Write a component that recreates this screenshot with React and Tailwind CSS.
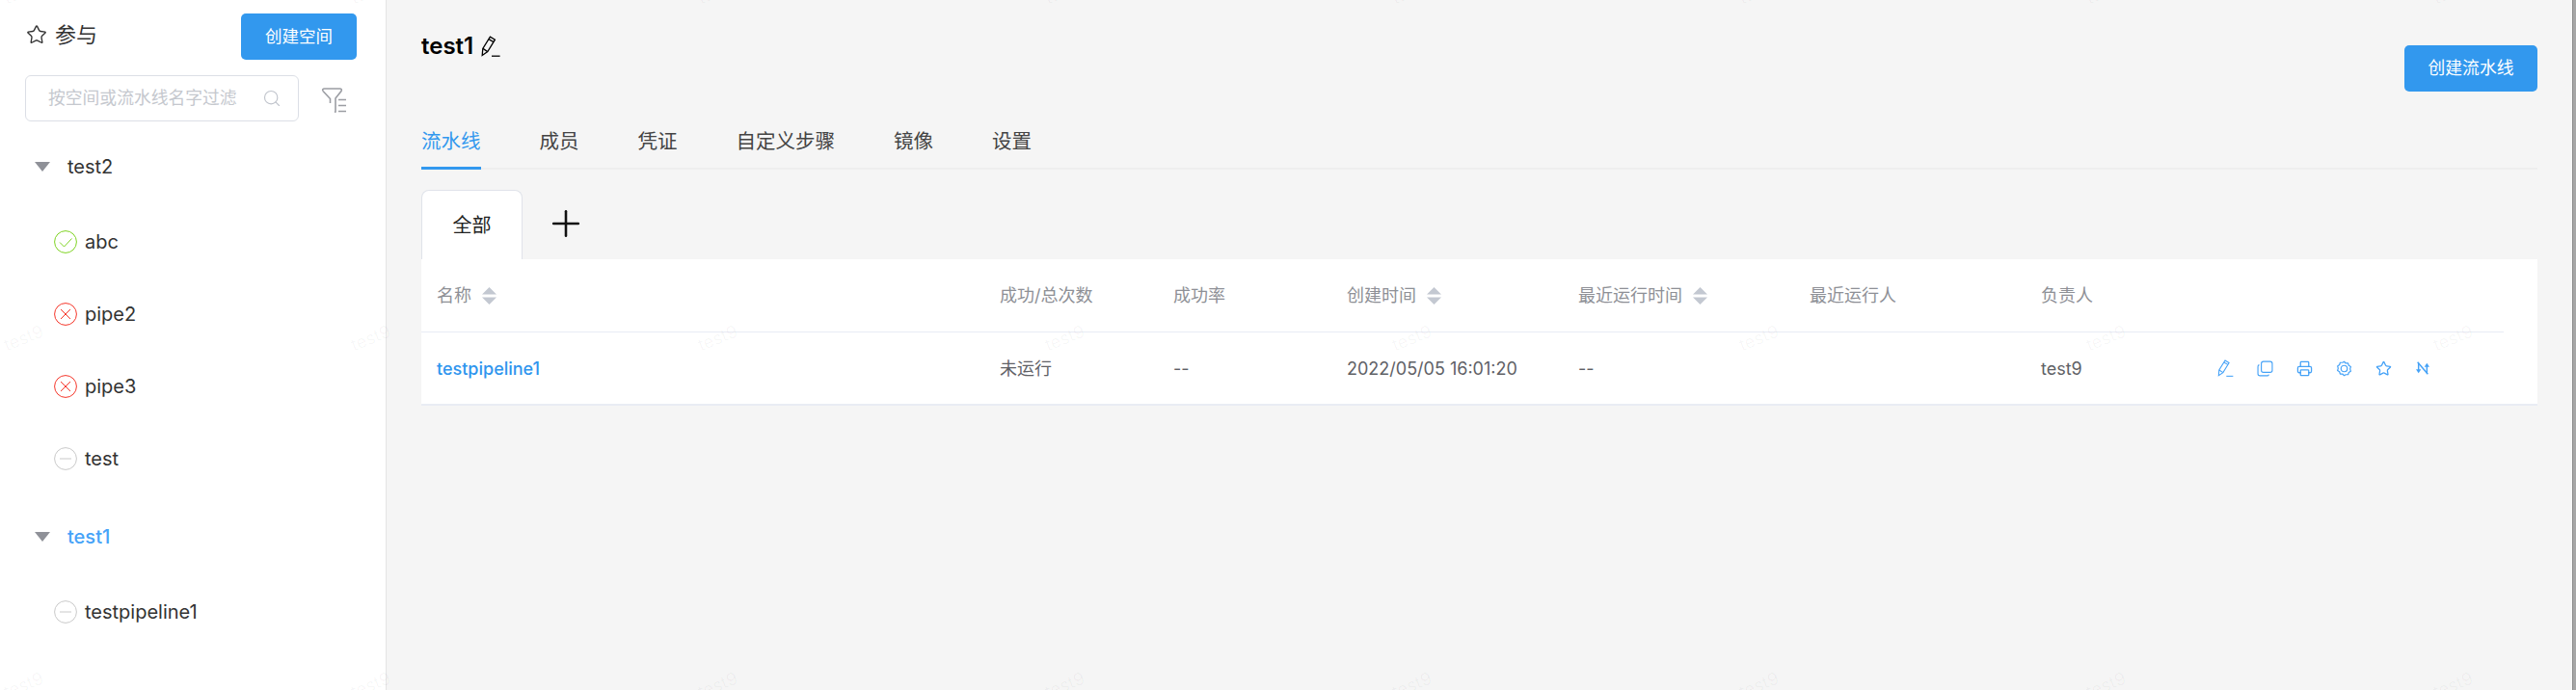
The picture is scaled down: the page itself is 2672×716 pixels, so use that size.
import React from "react";
import { Star, Search, Printer, Plus } from "lucide-react";

const groups = [
  {
    name: "test2",
    active: false,
    items: [
      { name: "abc", status: "ok" },
      { name: "pipe2", status: "fail" },
      { name: "pipe3", status: "fail" },
      { name: "test", status: "none" },
    ],
  },
  {
    name: "test1",
    active: true,
    items: [{ name: "testpipeline1", status: "none" }],
  },
];

const tabs = ["流水线", "成员", "凭证", "自定义步骤", "镜像", "设置"];

const PencilIcon = ({ className }) => (
  <svg viewBox="0 0 20 22" fill="none" stroke="currentColor" strokeWidth="1.3" className={className}>
    <path d="M1.2 20.5l.6-7L9.4 1.2l5 3L6.8 16.6l-5.6 3.9z" />
    <path d="M8 3.6l5 3" />
    <path d="M1.9 13.4l4.9 3.2" />
    <path d="M11 21.2h8.6" />
  </svg>
);

const CopyIcon = ({ className }) => (
  <svg viewBox="0 0 24 24" fill="none" stroke="currentColor" strokeWidth="1.6" className={className}>
    <rect x="6.5" y="1.5" width="16" height="16" rx="3" />
    <path d="M3.5 6.5A2.5 2.5 0 0 0 1.5 9v10.5a3 3 0 0 0 3 3H15a2.5 2.5 0 0 0 2.5-2" />
  </svg>
);

const GearIcon = ({ className }) => (
  <svg viewBox="0 0 24 24" fill="none" stroke="currentColor" strokeWidth="1.7" strokeLinejoin="round" className={className}>
    <path d="M12 1.8l2.4 2.4h3.4l1 3.2 2.9 1.9-1 3.2 1 3.3-2.9 1.8-1 3.2h-3.4L12 22.2l-2.4-2.4H6.2l-1-3.2-2.9-1.8 1-3.3-1-3.2 2.9-1.9 1-3.2h3.4z" />
    <circle cx="12" cy="12" r="4.6" />
  </svg>
);

const SyncOffIcon = ({ className }) => (
  <svg viewBox="0 0 24 24" fill="none" stroke="currentColor" strokeWidth="2.2" className={className}>
    <path d="M4 2.5l16 19" />
    <path d="M5.5 4v11" />
    <path d="M18.5 20V9" />
    <path d="M1.5 14h8l-4 6z" fill="currentColor" stroke="none" />
    <path d="M14.5 10h8l-4-6z" fill="currentColor" stroke="none" />
  </svg>
);

const FilterIcon = ({ className }) => (
  <svg viewBox="0 0 26 26" fill="none" stroke="currentColor" strokeWidth="1.6" className={className}>
    <path d="M2 3.5Q1 1 3.5 1h16q2.5 0 1.5 2.5L15 11v14l-1 .5" />
    <path d="M2 3.5L9.5 11.5V16" />
    <path d="M18 12.5h8M18 18.5h8M18 24.5h8" />
  </svg>
);

const SortIcon = () => (
  <svg viewBox="0 0 15 18" className="w-[15px] h-[18px] text-[#c3c8d1]" fill="currentColor">
    <path d="M7.5 0L15 7.5H0z" />
    <path d="M0 10.5h15L7.5 18z" />
  </svg>
);

const Caret = () => (
  <svg viewBox="0 0 16 10" className="w-4 h-[10px] text-[#8f9198]" fill="currentColor">
    <path d="M0 0h16L8 10z" />
  </svg>
);

const StatusIcon = ({ status }) => {
  const color =
    status === "ok" ? "text-[#7ed321]" : status === "fail" ? "text-[#f5362a]" : "text-[#c9c9c9]";
  return (
    <svg viewBox="0 0 24 24" fill="none" stroke="currentColor" strokeWidth="1" className={`w-6 h-6 shrink-0 ${color}`}>
      <circle cx="12" cy="12" r="11.4" />
      {status === "ok" && <path d="M6 12.5l4.5 4.5L18.5 8.5" />}
      {status === "fail" && <path d="M7 7l10 10M17 7L7 17" />}
      {status === "none" && <path d="M6 12h12" />}
    </svg>
  );
};

const Watermarks = () => (
  <div className="absolute left-[3px] top-[-22px] grid grid-cols-[repeat(8,360px)] auto-rows-[360px] pointer-events-none">
    {Array.from({ length: 24 }).map((_, i) => (
      <div key={i} className="self-start h-[25px] w-[43px] text-[18px] leading-[25px] text-black/[0.035] -rotate-[22deg]">
        test9
      </div>
    ))}
  </div>
);

const Sidebar = () => (
  <aside className="w-[401px] h-full shrink-0 bg-white border-r border-[#e4e4e4]">
    <div className="flex items-center h-[48px] mt-[14px] pl-[27px] pr-[30px]">
      <Star className="w-[22px] h-[22px] text-[#333] mr-[8px] mb-[4px]" strokeWidth={1.5} />
      <span className="text-[22px] text-[#333] mb-[4px]">参与</span>
      <button className="ml-auto w-[120px] h-[48px] rounded-[5px] bg-[#3298ee] text-white text-[17.5px]">
        创建空间
      </button>
    </div>
    <div className="flex items-center mt-[16px] pl-[26px]">
      <div className="flex items-center w-[284px] h-[48px] pl-[23px] pr-[17px] bg-white border border-[#dcdfe6] rounded-[6px]">
        <span className="text-[17.8px] text-[#c5c8ce] whitespace-nowrap">按空间或流水线名字过滤</span>
        <Search className="ml-auto w-[20px] h-[20px] text-[#c0c4cc]" strokeWidth={1.4} />
      </div>
      <FilterIcon className="ml-[23px] mt-[3px] w-[26px] h-[26px] text-[#9b9da3]" />
    </div>
    <div className="mt-[29px]">
      {groups.map((group) => (
        <div key={group.name} className="mb-[26px]">
          <div className="flex items-center h-[36px] pl-[36px]">
            <Caret />
            <span
              className={`ml-[18px] text-[20px] ${group.active ? "text-[#46a3f8] font-medium" : "text-[#333]"}`}
            >
              {group.name}
            </span>
          </div>
          <div className="pt-[22px]">
            {group.items.map((item) => (
              <div key={item.name} className="flex items-center h-[75px] pl-[56px]">
                <StatusIcon status={item.status} />
                <span className="ml-[8px] text-[20px] text-[#333]">{item.name}</span>
              </div>
            ))}
          </div>
        </div>
      ))}
    </div>
  </aside>
);

const PipelineTable = () => (
  <div className="bg-white border-b-2 border-[#e9ecf4]">
    <div className="w-[2160px]">
      <div className="grid grid-cols-[584px_180px_180px_240px_240px_240px_183px_313px] h-[76px] items-center border-b border-[#e8ecf5] text-[18px] text-[#8e9096]">
        <div className="pl-4 flex items-center gap-[11px]">名称 <SortIcon /></div>
        <div className="pl-4">成功/总次数</div>
        <div className="pl-4">成功率</div>
        <div className="pl-4 flex items-center gap-[11px]">创建时间 <SortIcon /></div>
        <div className="pl-4 flex items-center gap-[11px]">最近运行时间 <SortIcon /></div>
        <div className="pl-4">最近运行人</div>
        <div className="pl-4">负责人</div>
        <div />
      </div>
      <div className="grid grid-cols-[584px_180px_180px_240px_240px_240px_183px_313px] h-[74px] items-center text-[18px] text-[#5f6166]">
        <div className="pl-4 text-[#2f95ee] font-medium">testpipeline1</div>
        <div className="pl-4">未运行</div>
        <div className="pl-4">--</div>
        <div className="pl-4 whitespace-nowrap">2022/05/05 16:01:20</div>
        <div className="pl-4">--</div>
        <div className="pl-4" />
        <div className="pl-4">test9</div>
        <div className="pl-4 flex items-center gap-[24px] text-[#45a2f7]">
          <PencilIcon className="w-[17px] h-[18px]" />
          <CopyIcon className="w-[17px] h-[17px]" />
          <Printer className="w-[17px] h-[17px]" strokeWidth={1.8} />
          <GearIcon className="w-[17px] h-[17px]" />
          <Star className="w-[17px] h-[17px]" strokeWidth={1.8} />
          <SyncOffIcon className="w-[16px] h-[16px]" />
        </div>
      </div>
    </div>
  </div>
);

const App = () => {
  return (
    <div className="relative flex w-full h-[716px] overflow-hidden bg-[#f5f5f5] font-['Inter','Noto_Sans_CJK_SC',sans-serif]">
      <Sidebar />
      <main className="flex-1 min-w-0 pl-[36px] pr-[36px]">
        <div className="flex items-start justify-between h-[130px]">
          <div className="flex items-center mt-[30px]">
            <span className="text-[24px] font-semibold text-black">test1</span>
            <PencilIcon className="ml-[8px] w-[20px] h-[22px] text-black" />
          </div>
          <button className="mt-[47px] w-[138px] h-[48px] rounded-[5px] bg-[#3298ee] text-white text-[17.8px]">
            创建流水线
          </button>
        </div>
        <div className="flex items-start h-[46px] gap-[61px] border-b-2 border-[#eeeeee]">
          {tabs.map((tab, i) => (
            <div
              key={tab}
              className={`h-[46px] flex items-center text-[20.5px] whitespace-nowrap ${
                i === 0 ? "pb-[9px] text-[#3298ee] border-b-[3px] border-[#3298ee]" : "pb-[12px] text-[#444]"
              }`}
            >
              {tab}
            </div>
          ))}
        </div>
        <div className="flex items-start h-[72px] mt-[21px]">
          <div className="flex items-center justify-center w-[105px] h-[72px] bg-white border border-b-0 border-[#e0e3ea] rounded-t-[8px] text-[20px] text-[#222]">
            全部
          </div>
          <Plus className="ml-[23px] mt-[13px] w-[44px] h-[44px] text-[#111]" strokeWidth={1.4} />
        </div>
        <PipelineTable />
      </main>
      <div className="w-[4px] shrink-0 bg-[#a6a6a6] border-l border-[#8c8c8c]" />
      <Watermarks />
    </div>
  );
};

export default App;
